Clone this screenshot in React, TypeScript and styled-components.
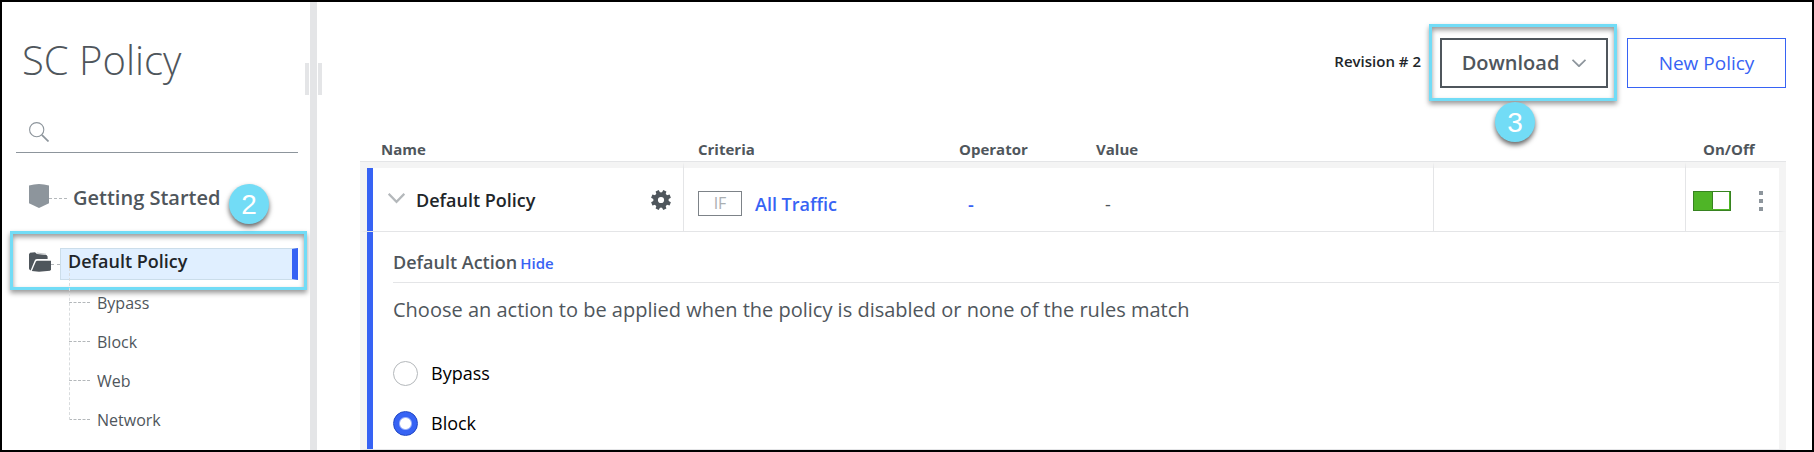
import React, { useState } from "react";
import styled, { createGlobalStyle } from "styled-components";

const ink = "#4f565c";
const dark = "#212529";
const blue = "#3763f4";
const aqua = "#72dcf6";
const line = "#e4e5e7";
const frame = "#f4f4f4";
const muted = "#8d959c";

const GlobalStyle = createGlobalStyle`
  * { box-sizing: border-box; }
  body { margin: 0; background: #fff; font-family: "Open Sans", "Noto Sans", sans-serif; color: ${ink}; }
  button, input { font: inherit; color: inherit; margin: 0; }
  button { background: none; border: 0; padding: 0; cursor: pointer; }
  a { color: inherit; text-decoration: none; }
  svg { display: block; flex: none; }
  ul { list-style: none; margin: 0; padding: 0; }
`;

const Page = styled.div`
  display: flex;
  min-height: 100vh;
  border: 2px solid #000;
`;

const Sidebar = styled.aside`
  flex: 0 0 308px;
  padding: 28px 12px 0 14px;
`;

const Title = styled.h1`
  margin: 0 0 26px 6px;
  font-size: 40px;
  line-height: 60px;
  font-weight: 300;
`;

const Search = styled.label`
  display: flex;
  align-items: center;
  gap: 12px;
  height: 37px;
  padding: 0 0 5px 13px;
  border-bottom: 1px solid ${muted};
  color: ${muted};
`;

const SearchInput = styled.input`
  flex: 1;
  min-width: 0;
  border: 0;
  outline: 0;
  background: none;
  font-size: 16px;
`;

const Splitter = styled.div`
  position: relative;
  flex: 0 0 7px;
  background: ${line};
  &::before {
    content: "";
    position: absolute;
    top: 61px;
    left: -5px;
    right: -5px;
    height: 32px;
    border: solid ${line};
    border-width: 0 4px;
  }
`;

const Tree = styled.ul`
  padding-top: 25px;
`;

const TreeRow = styled.div`
  position: relative;
  display: flex;
  align-items: center;
  height: 40px;
  padding-left: 13px;
`;

const NodeIcon = styled.span`
  padding-bottom: 4px;
`;

const Dashes = styled.span<{ $width: number }>`
  width: ${(p) => p.$width}px;
  border-top: 1px dashed #b4b8bb;
`;

const SectionLink = styled.a`
  margin-left: 6px;
  font-size: 20px;
  line-height: 28px;
  font-weight: 600;
`;

const PolicyItem = styled.li`
  margin-top: 30px;
`;

const PolicyRow = styled(TreeRow)`
  height: 32px;
`;

const ActiveLink = styled.a`
  flex: 1;
  height: 32px;
  padding-left: 7px;
  border: 1px solid #cbddea;
  border-right: 6px solid ${blue};
  background: #e0efff;
  color: ${dark};
  font-size: 18px;
  line-height: 24px;
  font-weight: 600;
`;

const Children = styled.ul`
  position: relative;
  margin-left: 53px;
  padding-top: 3px;
  &::before {
    content: "";
    position: absolute;
    top: -12px;
    bottom: 19px;
    border-left: 1px dashed #d9dcde;
  }
`;

const Child = styled.li`
  display: flex;
  align-items: center;
  gap: 7px;
  height: 39px;
  font-size: 16px;
  line-height: 20px;
`;

const Highlight = styled.span<{ $inset: string }>`
  position: absolute;
  inset: ${(p) => p.$inset};
  border: 3px solid ${aqua};
  box-shadow: 0 3px 5px rgba(0, 0, 0, 0.4), inset 0 3px 5px rgba(0, 0, 0, 0.4);
  pointer-events: none;
`;

const Step = styled.span<{ $left: number; $top: number }>`
  position: absolute;
  z-index: 1;
  left: ${(p) => p.$left}px;
  top: ${(p) => p.$top}px;
  width: 40px;
  height: 40px;
  border-radius: 50%;
  background: ${aqua};
  box-shadow: 0 3px 5px rgba(0, 0, 0, 0.6);
  color: #fff;
  font-family: "Liberation Sans", Arial, sans-serif;
  font-size: 28px;
  line-height: 42px;
  font-weight: 400;
  text-align: center;
`;

const Main = styled.main`
  flex: 1;
  min-width: 0;
  padding: 36px 26px 0 43px;
`;

const Toolbar = styled.header`
  display: flex;
  align-items: center;
  justify-content: flex-end;
`;

const Revision = styled.span`
  margin-right: 19px;
  padding-bottom: 4px;
  color: ${dark};
  font-size: 15px;
  line-height: 20px;
  font-weight: 600;
`;

const DownloadSlot = styled.div`
  position: relative;
  margin-right: 19px;
`;

const ToolButton = styled.button<{ $primary?: boolean }>`
  display: flex;
  align-items: center;
  justify-content: center;
  gap: 13px;
  width: ${(p) => (p.$primary ? 159 : 168)}px;
  height: 50px;
  border: ${(p) => (p.$primary ? `1px solid ${blue}` : `2px solid ${ink}`)};
  color: ${(p) => (p.$primary ? blue : ink)};
  font-size: ${(p) => (p.$primary ? 19 : 20)}px;
  line-height: 28px;
  font-weight: ${(p) => (p.$primary ? 400 : 600)};
`;

const Rules = styled.table`
  width: 100%;
  margin-top: 49px;
  border-spacing: 0;
  table-layout: fixed;
`;

const Col = styled.col<{ $width?: number }>`
  width: ${(p) => (p.$width ? `${p.$width}px` : "auto")};
`;

const Head = styled.th<{ $pad?: number }>`
  height: 25px;
  padding: 0 0 0 ${(p) => p.$pad ?? 14}px;
  border-bottom: 1px solid ${line};
  font-size: 15px;
  line-height: 24px;
  font-weight: 700;
  text-align: left;
  vertical-align: top;
`;

const Cell = styled.td<{ $divided?: boolean }>`
  height: 70px;
  padding: 0 0 0 14px;
  border-top: 6px solid ${frame};
  border-bottom: 1px solid ${line};
  ${(p) => p.$divided && `border-right: 1px solid ${line};`}
  &:first-child {
    padding-right: 12px;
    padding-left: 21px;
    border-left: 7px solid ${frame};
    box-shadow: inset 6px 0 ${blue};
  }
  &:last-child {
    padding: 3px 16px 0 7px;
    border-right: 7px solid ${frame};
  }
`;

const CellRow = styled.div<{ $gap?: number; $spread?: boolean }>`
  display: flex;
  align-items: center;
  gap: ${(p) => p.$gap ?? 0}px;
  ${(p) => p.$spread && "justify-content: space-between;"}
`;

const CriteriaRow = styled(CellRow)`
  padding-top: 8px;
`;

const PolicyName = styled.span`
  color: ${dark};
  font-size: 18px;
  line-height: 26px;
  font-weight: 600;
`;

const IfTag = styled.span`
  width: 44px;
  height: 25px;
  margin-bottom: 1px;
  border: 1px solid #7d8388;
  color: #abafb2;
  font-size: 16px;
  line-height: 23px;
  text-align: center;
`;

const CellLink = styled.button`
  color: ${blue};
  font-size: 18px;
  line-height: 26px;
  font-weight: 600;
`;

const Dash = styled.div`
  padding: 8px 0 0 9px;
  font-size: 18px;
  line-height: 26px;
`;

const Toggle = styled.input`
  appearance: none;
  width: 38px;
  height: 20px;
  border: 1px solid #378320;
  background: #fff;
  cursor: pointer;
  &:checked {
    background: linear-gradient(90deg, #4fb527 18px, #378320 18px 19px, #fff 19px 35px, #4fb527 35px);
    box-shadow: inset 0 -1px #4fb527;
  }
`;

const Detail = styled.td`
  padding: 14px 0 13px 26px;
  border: 0 solid ${frame};
  border-width: 0 7px;
  border-bottom: 1px solid ${line};
  box-shadow: inset 6px 0 ${blue};
`;

const DetailHead = styled.div`
  display: flex;
  align-items: baseline;
  gap: 3px;
  height: 37px;
  border-bottom: 1px solid ${line};
`;

const DetailTitle = styled.h2`
  margin: 0;
  font-size: 18px;
  line-height: 32px;
  font-weight: 600;
`;

const HideButton = styled.button`
  color: ${blue};
  font-size: 15px;
  line-height: 20px;
  font-weight: 600;
`;

const Options = styled.fieldset`
  display: flex;
  flex-direction: column;
  gap: 25px;
  margin: 0;
  padding: 0;
  border: 0;
`;

const Legend = styled.legend`
  margin-bottom: 37px;
  padding: 13px 0 0;
  font-size: 20px;
  line-height: 28px;
`;

const Option = styled.label`
  display: flex;
  align-items: center;
  gap: 13px;
  height: 25px;
  color: #000;
  font-size: 18px;
  line-height: 24px;
`;

const OptionName = styled.span`
  padding-bottom: 2px;
`;

const Radio = styled.input`
  appearance: none;
  width: 25px;
  height: 25px;
  border: 1px solid #b4b8bb;
  border-radius: 50%;
  &:checked {
    border-color: #1f46c4;
    background: radial-gradient(circle, #fff 5px, ${blue} 7px);
  }
`;

const Icon = ({ w, h, children }: { w: number; h: number; children: React.ReactNode }) => (
  <svg width={w} height={h} viewBox={`0 0 ${w} ${h}`} aria-hidden="true">
    {children}
  </svg>
);

const SearchIcon = () => (
  <Icon w={20} h={20}>
    <g fill="none" stroke={muted}>
      <circle cx="7.7" cy="7.7" r="7.1" strokeWidth="1.1" />
      <path d="M12.8 12.8 19.5 19.5" strokeWidth="1.7" />
    </g>
  </Icon>
);

const ShieldIcon = () => (
  <Icon w={20} h={24}>
    <path d="M0 1.6Q10-1.4 20 1.6V19.2L10 24 0 19.2Z" fill={muted} />
  </Icon>
);

const FolderIcon = () => (
  <Icon w={22} h={20}>
    <path d="M0 2.2 1 .8 6 .2 8 2.1 17.5 3 18.6 4.6V7H8.2Q6.4 7 5.7 8.4L1.6 18.4.4 17.6Q0 17 0 16Z" fill={ink} />
    <path d="M8.4 8.7H22V17.8L21 18.8 10 19.8 2.8 18.9 6.8 9.8Q7.3 8.7 8.4 8.7Z" fill={ink} />
    <path d="M8 1 17 2.2" stroke="#a9adb0" strokeWidth=".7" />
  </Icon>
);

const GearIcon = () => (
  <Icon w={20} h={20}>
    <g fill={ink}>
      {[22.5, 67.5, 112.5, 157.5, 202.5, 247.5, 292.5, 337.5].map((a) => (
        <path key={a} d="M7.9 3.5 8.3 0H11.7L12.1 3.5Z" transform={`rotate(${a} 10 10)`} />
      ))}
      <circle cx="10" cy="10" r="5.4" fill="none" stroke={ink} strokeWidth="4.6" />
    </g>
  </Icon>
);

const children = ["Bypass", "Block", "Web", "Network"];

export default function App() {
  const [action, setAction] = useState("Block");
  const [open, setOpen] = useState(true);
  return (
    <Page>
      <GlobalStyle />
      <Sidebar>
        <Title>SC Policy</Title>
        <Search>
          <SearchIcon />
          <SearchInput type="search" aria-label="Search policies" />
        </Search>
        <nav>
          <Tree>
            <li>
              <TreeRow>
                <NodeIcon>
                  <ShieldIcon />
                </NodeIcon>
                <Dashes $width={18} />
                <SectionLink href="#getting-started">Getting Started</SectionLink>
                <Step $left={213} $top={6}>2</Step>
              </TreeRow>
            </li>
            <PolicyItem>
              <PolicyRow>
                <NodeIcon>
                  <FolderIcon />
                </NodeIcon>
                <Dashes $width={9} />
                <ActiveLink href="#default-policy" aria-current="page">Default Policy</ActiveLink>
                <Highlight $inset="-17px -9px -10px -6px" />
              </PolicyRow>
              <Children>
                {children.map((name) => (
                  <Child key={name}>
                    <Dashes $width={21} />
                    <a href={`#${name.toLowerCase()}`}>{name}</a>
                  </Child>
                ))}
              </Children>
            </PolicyItem>
          </Tree>
        </nav>
      </Sidebar>
      <Splitter />
      <Main>
        <Toolbar>
          <Revision>Revision # 2</Revision>
          <DownloadSlot>
            <ToolButton type="button">
              Download
              <Icon w={14} h={8}>
                <path d="M.5.8 7 7.2 13.5.8" fill="none" stroke={muted} strokeWidth="1.8" />
              </Icon>
            </ToolButton>
            <Highlight $inset="-14px -9px -13px -11px" />
            <Step $left={55} $top={64}>3</Step>
          </DownloadSlot>
          <ToolButton type="button" $primary>New Policy</ToolButton>
        </Toolbar>
        <Rules>
          <colgroup>
            <Col $width={324} />
            <Col $width={261} />
            <Col $width={137} />
            <Col />
            <Col $width={252} />
            <Col $width={100} />
          </colgroup>
          <thead>
            <tr>
              <Head $pad={21}>Name</Head>
              <Head>Criteria</Head>
              <Head>Operator</Head>
              <Head colSpan={2}>Value</Head>
              <Head $pad={17}>On/Off</Head>
            </tr>
          </thead>
          <tbody>
            <tr>
              <Cell $divided>
                <CellRow $spread>
                  <CellRow $gap={11}>
                    <button type="button" aria-label="Toggle details" onClick={() => setOpen(!open)}>
                      <Icon w={17} h={14}>
                        <path d="M.7.8 8.5 8.8 16.3.8" fill="none" stroke="#b4b8bb" strokeWidth="2.2" />
                      </Icon>
                    </button>
                    <PolicyName>Default Policy</PolicyName>
                  </CellRow>
                  <button type="button" aria-label="Policy settings">
                    <GearIcon />
                  </button>
                </CellRow>
              </Cell>
              <Cell>
                <CriteriaRow $gap={13}>
                  <IfTag>IF</IfTag>
                  <CellLink type="button">All Traffic</CellLink>
                </CriteriaRow>
              </Cell>
              <Cell>
                <Dash>
                  <CellLink type="button">-</CellLink>
                </Dash>
              </Cell>
              <Cell $divided>
                <Dash>-</Dash>
              </Cell>
              <Cell $divided />
              <Cell>
                <CellRow $spread>
                  <Toggle type="checkbox" defaultChecked aria-label="Policy on or off" />
                  <button type="button" aria-label="More actions">
                    <Icon w={4} h={20}>
                      <path d="M0 0h4v4H0zM0 8h4v4H0zM0 16h4v4H0z" fill={muted} />
                    </Icon>
                  </button>
                </CellRow>
              </Cell>
            </tr>
            {open && (
              <tr>
                <Detail colSpan={6}>
                  <DetailHead>
                    <DetailTitle>Default Action</DetailTitle>
                    <HideButton type="button" onClick={() => setOpen(false)}>Hide</HideButton>
                  </DetailHead>
                  <Options>
                    <Legend>Choose an action to be applied when the policy is disabled or none of the rules match</Legend>
                    {["Bypass", "Block"].map((name) => (
                      <Option key={name}>
                        <Radio type="radio" name="action" checked={action === name} onChange={() => setAction(name)} />
                        <OptionName>{name}</OptionName>
                      </Option>
                    ))}
                  </Options>
                </Detail>
              </tr>
            )}
          </tbody>
        </Rules>
      </Main>
    </Page>
  );
}
